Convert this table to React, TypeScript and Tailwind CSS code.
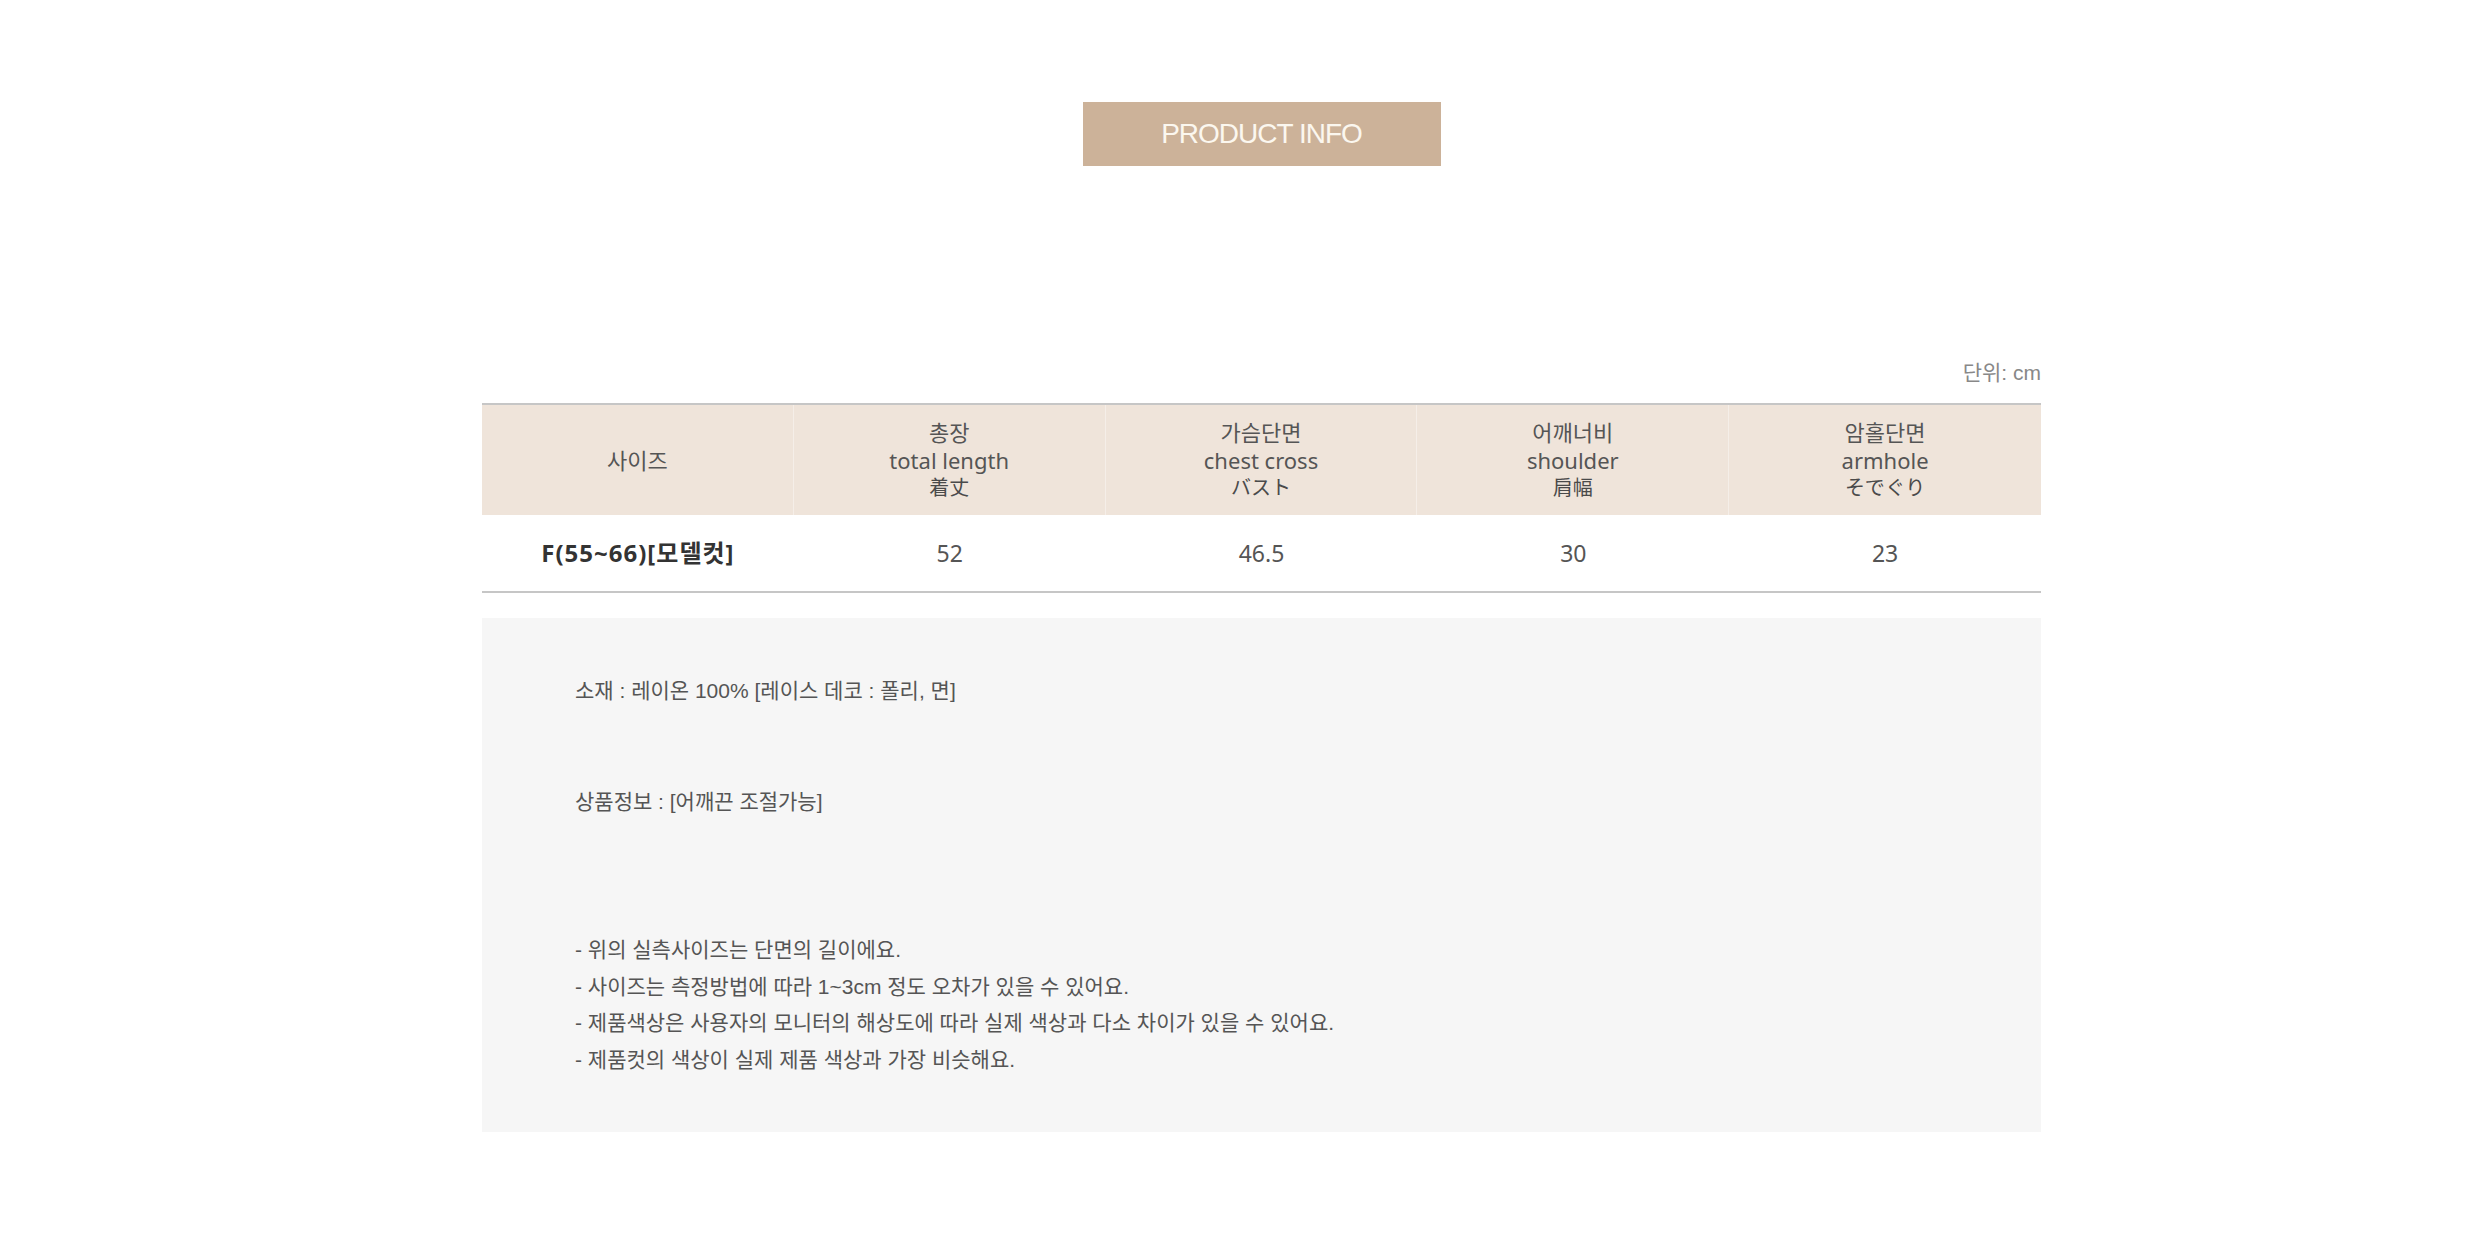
import React from "react";

const cols = [
  { ko: "총장", en: "total length", jp: "着丈", v: "52" },
  { ko: "가슴단면", en: "chest cross", jp: "バスト", v: "46.5" },
  { ko: "어깨너비", en: "shoulder", jp: "肩幅", v: "30" },
  { ko: "암홀단면", en: "armhole", jp: "そでぐり", v: "23" },
];

export default function App() {
  return (
    <div className="min-h-[1256px] w-full bg-white pt-[102px] pl-[482px]">
      <div className="w-[1559px]">
        <div className="flex justify-center">
          <div className="flex h-[64px] w-[358px] items-center justify-center bg-[#ccb299]">
            <span className="font-['Liberation_Sans',sans-serif] text-[28px] tracking-[-1px] text-[#fbf7ef]">
              PRODUCT INFO
            </span>
          </div>
        </div>

        <div className="mt-[193px] text-right font-['Liberation_Sans','Noto_Sans_CJK_KR',sans-serif] text-[21px] leading-[28px] text-[#888]">
          단위: cm
        </div>

        <div className="mt-[16px] border-t-2 border-b-2 border-[#c6c6c6] font-['Noto_Sans','Noto_Sans_CJK_KR',sans-serif]">
          <div className="grid h-[110px] grid-cols-5 bg-[#efe4da] text-[22px] leading-[28px] text-[#555]">
            <div className="flex items-center justify-center border-r border-[#f5eee8]">사이즈</div>
            {cols.map((c, i) => (
              <div
                key={c.ko}
                className={`flex flex-col items-center justify-center ${i < 3 ? "border-r border-[#f5eee8]" : ""}`}
              >
                <span>{c.ko}</span>
                <span>{c.en}</span>
                <span className="text-[20px] text-[#4a4a4a]">{c.jp}</span>
              </div>
            ))}
          </div>
          <div className="grid h-[76px] grid-cols-5 bg-white text-[23px] text-[#555]">
            <div className="flex items-center justify-center text-[24px] font-bold tracking-[1px] text-[#333]">
              F(55~66)[모델컷]
            </div>
            {cols.map((c) => (
              <div key={c.ko} className="flex items-center justify-center">
                {c.v}
              </div>
            ))}
          </div>
        </div>

        <div className="mt-[25px] h-[514px] bg-[#f6f6f6] pl-[93px] pt-[55px] font-['Liberation_Sans','Noto_Sans_CJK_KR',sans-serif] text-[21px] leading-[36px] text-[#555]">
          <p>소재 : 레이온 100% [레이스 데코 : 폴리, 면]</p>
          <p className="mt-[75px]">상품정보 : [어깨끈 조절가능]</p>
          <div className="mt-[112px] leading-[36.5px]">
            <p>- 위의 실측사이즈는 단면의 길이에요.</p>
            <p>- 사이즈는 측정방법에 따라 1~3cm 정도 오차가 있을 수 있어요.</p>
            <p>- 제품색상은 사용자의 모니터의 해상도에 따라 실제 색상과 다소 차이가 있을 수 있어요.</p>
            <p>- 제품컷의 색상이 실제 제품 색상과 가장 비슷해요.</p>
          </div>
        </div>
      </div>
    </div>
  );
}
